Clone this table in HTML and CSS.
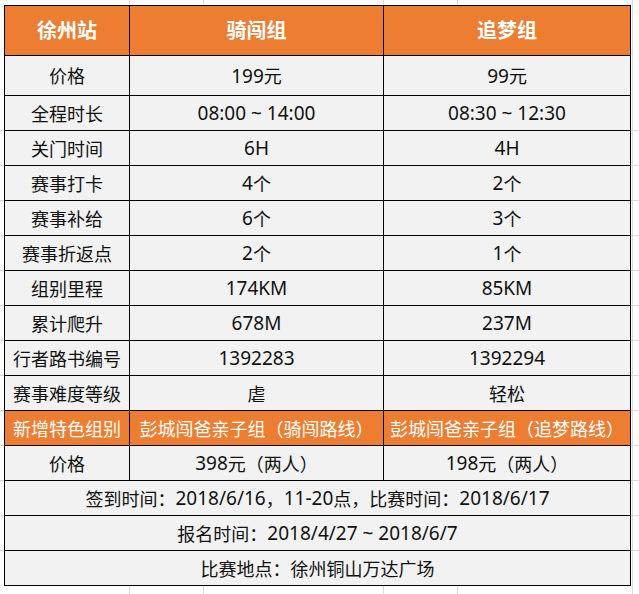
FILE: index.html
```html
<!DOCTYPE html>
<html lang="zh">
<head>
<meta charset="utf-8">
<title>徐州站</title>
<link rel="stylesheet" href="styles.css">
</head>
<body>
<div class="sheet">
  <div class="grid">
    <div class="cell head">徐州站</div>
    <div class="cell head">骑闯组</div>
    <div class="cell head">追梦组</div>

    <div class="cell">价格</div>
    <div class="cell"><span class="num">199</span>元</div>
    <div class="cell"><span class="num">99</span>元</div>

    <div class="cell">全程时长</div>
    <div class="cell num">08:00 ~ 14:00</div>
    <div class="cell num">08:30 ~ 12:30</div>

    <div class="cell">关门时间</div>
    <div class="cell num">6H</div>
    <div class="cell num">4H</div>

    <div class="cell">赛事打卡</div>
    <div class="cell"><span class="num">4</span>个</div>
    <div class="cell"><span class="num">2</span>个</div>

    <div class="cell">赛事补给</div>
    <div class="cell"><span class="num">6</span>个</div>
    <div class="cell"><span class="num">3</span>个</div>

    <div class="cell">赛事折返点</div>
    <div class="cell"><span class="num">2</span>个</div>
    <div class="cell"><span class="num">1</span>个</div>

    <div class="cell">组别里程</div>
    <div class="cell num">174KM</div>
    <div class="cell num">85KM</div>

    <div class="cell">累计爬升</div>
    <div class="cell num">678M</div>
    <div class="cell num">237M</div>

    <div class="cell">行者路书编号</div>
    <div class="cell num">1392283</div>
    <div class="cell num">1392294</div>

    <div class="cell">赛事难度等级</div>
    <div class="cell">虐</div>
    <div class="cell">轻松</div>

    <div class="cell accent">新增特色组别</div>
    <div class="cell accent">彭城闯爸亲子组（骑闯路线）</div>
    <div class="cell accent">彭城闯爸亲子组（追梦路线）</div>

    <div class="cell">价格</div>
    <div class="cell"><span class="num">398</span>元（两人）</div>
    <div class="cell"><span class="num">198</span>元（两人）</div>

    <div class="cell full">签到时间：<span class="num">2018/6/16</span>，<span class="num">11-20</span>点，比赛时间：<span class="num">2018/6/17</span></div>
    <div class="cell full">报名时间：<span class="num">2018/4/27 ~ 2018/6/7</span></div>
    <div class="cell full">比赛地点：徐州铜山万达广场</div>
  </div>
</div>
</body>
</html>
```
FILE: styles.css
```css
html, body {
  margin: 0;
  padding: 0;
  background: #ffffff;
}

.sheet {
  width: 639px;
  height: 594px;
  overflow: hidden;
  padding: 5px 0 0 4px;
  box-sizing: border-box;
  background-color: #ffffff;
  background-image:
    linear-gradient(to right, transparent 129px, #d9d9d9 129px, #d9d9d9 130px, transparent 130px),
    linear-gradient(to right, transparent 203px, #d9d9d9 203px, #d9d9d9 204px, transparent 204px),
    linear-gradient(to right, transparent 383px, #d9d9d9 383px, #d9d9d9 384px, transparent 384px),
    linear-gradient(to right, transparent 457px, #d9d9d9 457px, #d9d9d9 458px, transparent 458px),
    linear-gradient(to right, transparent 632px, #d9d9d9 632px, #d9d9d9 633px, transparent 633px),
    linear-gradient(to bottom, transparent 410px, #d9d9d9 410px, #d9d9d9 411px, transparent 411px),
    linear-gradient(to bottom, transparent 445px, #d9d9d9 445px, #d9d9d9 446px, transparent 446px),
    linear-gradient(to bottom, transparent 480px, #d9d9d9 480px, #d9d9d9 481px, transparent 481px),
    linear-gradient(to bottom, transparent 515px, #d9d9d9 515px, #d9d9d9 516px, transparent 516px),
    linear-gradient(to bottom, transparent 550px, #d9d9d9 550px, #d9d9d9 551px, transparent 551px),
    linear-gradient(to bottom, transparent 130px, #d9d9d9 130px, #d9d9d9 131px, transparent 131px),
    linear-gradient(to bottom, transparent 165px, #d9d9d9 165px, #d9d9d9 166px, transparent 166px),
    linear-gradient(to bottom, transparent 200px, #d9d9d9 200px, #d9d9d9 201px, transparent 201px),
    linear-gradient(to bottom, transparent 235px, #d9d9d9 235px, #d9d9d9 236px, transparent 236px),
    linear-gradient(to bottom, transparent 270px, #d9d9d9 270px, #d9d9d9 271px, transparent 271px),
    linear-gradient(to bottom, transparent 305px, #d9d9d9 305px, #d9d9d9 306px, transparent 306px),
    linear-gradient(to bottom, transparent 340px, #d9d9d9 340px, #d9d9d9 341px, transparent 341px),
    linear-gradient(to bottom, transparent 375px, #d9d9d9 375px, #d9d9d9 376px, transparent 376px);
}

.grid {
  display: grid;
  grid-template-columns: 125px 254px 247px;
  grid-template-rows: 50px 40px repeat(14, 35px);
  width: 627px;
  border-left: 1px solid #000;
  border-top: 1px solid #000;
  box-sizing: border-box;
  font-family: "Noto Sans", "Noto Sans CJK SC", sans-serif;
  font-size: 18px;
  color: #111;
}

.cell {
  display: flex;
  align-items: center;
  justify-content: center;
  border-right: 1px solid #000;
  border-bottom: 1px solid #000;
  background: #f2f2f2;
  white-space: nowrap;
  line-height: 1;
  padding-top: 1px;
  box-sizing: border-box;
}

.num {
  font-size: 19px;
}

.head {
  background: #ed7d31;
  color: #ffffff;
  font-weight: bold;
  font-size: 20px;
}

.accent {
  background: #ed7d31;
  color: #ffffff;
}

.full {
  grid-column: 1 / -1;
}
```
